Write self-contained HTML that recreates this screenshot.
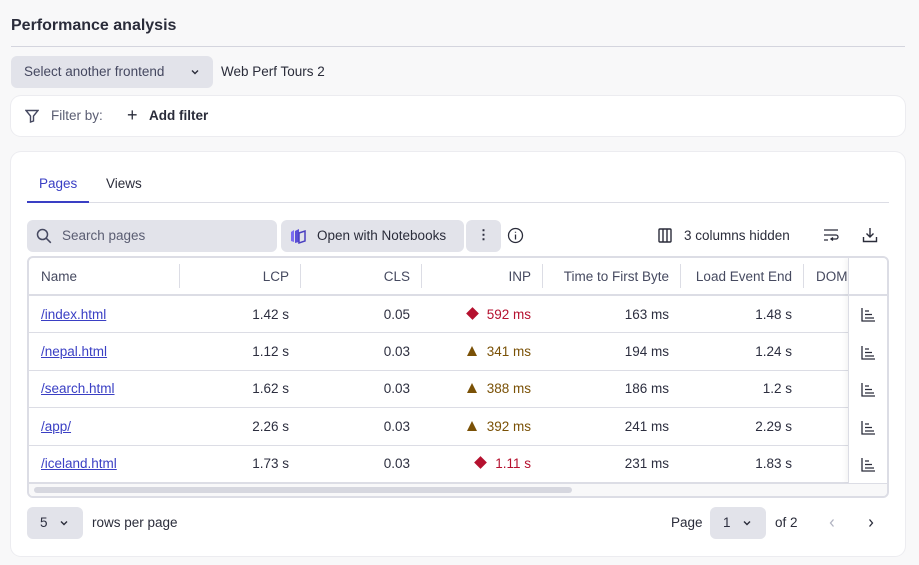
<!DOCTYPE html>
<html><head><meta charset="utf-8"><style>
*{box-sizing:border-box;margin:0;padding:0}
body{width:919px;height:565px;background:#f8f8f9;font-family:"Liberation Sans",sans-serif;font-size:13.5px;color:#2c2e3f;position:relative;overflow:hidden}
.abs{position:absolute}
.title{left:11px;top:17px;font-size:16px;font-weight:bold;color:#2a2c3a}
.hr{left:11px;top:46px;width:894px;height:1px;background:#d4d5de}
.sel{left:11px;top:56px;width:202px;height:32px;background:#e2e3ea;border-radius:6px;color:#454860;padding:8px 13px}
.card{background:#fff;box-shadow:0 0 0 1px #ececf0;border-radius:10px}
.btn{background:#e2e3ea;border-radius:6px}
table{border-collapse:collapse;position:absolute;left:0;top:0}
td{height:37.5px;border-bottom:1px solid #dcdde5;text-align:right;padding-right:12px;white-space:nowrap}
.hd td{height:37px;color:#464a60;border-bottom:2px solid #dcdde5}
.hd td{position:relative}
.sep{position:absolute;right:0;top:6px;height:24px;width:1px;background:#dcdde5}
a{color:#3a3fc4;text-decoration:underline}
.red{color:#b5112f}.amb{color:#7a5106}
.dia{display:inline-block;width:9px;height:9px;background:#b5112f;transform:rotate(45deg);margin-right:10px;vertical-align:1px}
.tri{display:inline-block;width:0;height:0;border-left:5.5px solid transparent;border-right:5.5px solid transparent;border-bottom:10px solid #7a5106;margin-right:10px}
.chev{position:absolute}
</style></head><body>
<div class="abs title">Performance analysis</div>
<div class="abs hr"></div>
<div class="abs sel">Select another frontend</div>
<svg class="abs" style="left:190px;top:68px" width="10" height="8" viewBox="0 0 10 8" fill="none" stroke="#2a2c3a" stroke-width="1.4"><path d="M2 2.5l3 3 3-3"/></svg>
<div class="abs" style="left:221px;top:64px;color:#2a2c3a">Web Perf Tours 2</div>
<div class="abs card" style="left:11px;top:96px;width:894px;height:40px">
<svg class="abs" style="left:14px;top:13px" width="14" height="14" viewBox="0 0 14 14" fill="none" stroke="#454860" stroke-width="1.4"><path d="M1 1.5h12L8.5 7v5L5.5 13V7z"/></svg>
<div class="abs" style="left:40px;top:12px;color:#5a5d72">Filter by:</div>
<div class="abs" style="left:116px;top:9px;font-size:18px;color:#2a2c3a">+</div>
<div class="abs" style="left:138px;top:12px;font-weight:bold;color:#2a2c3a">Add filter</div>
</div>
<div class="abs card" style="left:11px;top:152px;width:894px;height:404px">
<div class="abs" style="left:28px;top:24px;color:#3a3fc4">Pages</div>
<div class="abs" style="left:95px;top:24px;color:#2a2c3a">Views</div>
<div class="abs" style="left:16px;top:50px;width:862px;height:1px;background:#dcdde5"></div>
<div class="abs" style="left:16px;top:49px;width:62px;height:2px;background:#3a3fc4"></div>
<div class="abs btn" style="left:16px;top:68px;width:250px;height:32px"></div>
<svg class="abs" style="left:25px;top:76px" width="16" height="16" viewBox="0 0 16 16" fill="none" stroke="#454860" stroke-width="1.5"><circle cx="6.5" cy="6.5" r="5"/><path d="M10.3 10.3l4.5 4.5"/></svg>
<div class="abs" style="left:51px;top:76px;color:#5a5d72">Search pages</div>
<div class="abs btn" style="left:270px;top:68px;width:183px;height:32px"></div>
<svg class="abs" style="left:279px;top:75px" width="16" height="18" viewBox="0 0 16 18"><path d="M1 5l3-2v12l-3-1z" fill="#7b6cf0"/><path d="M5 4l4-2v13l-4 1z" fill="#5b4fd6"/><path d="M9 6l6-2v10l-6 2z" fill="none" stroke="#4a3fc0" stroke-width="1.5"/></svg>
<div class="abs" style="left:306px;top:76px;color:#2a2c3a">Open with Notebooks</div>
<div class="abs btn" style="left:455px;top:68px;width:35px;height:32px;text-align:center;font-weight:bold;padding-top:7px">&#8942;</div>
<svg class="abs" style="left:496px;top:75px" width="17" height="17" viewBox="0 0 17 17" fill="none" stroke="#2a2c3a" stroke-width="1.3"><circle cx="8.5" cy="8.5" r="7"/><path d="M8.5 7.5v5M8.5 4.8v1"/></svg>
<svg class="abs" style="left:647px;top:76px" width="14" height="15" viewBox="0 0 14 15" fill="none" stroke="#2a2c3a" stroke-width="1.4"><rect x="1" y="1" width="12" height="13" rx="1"/><path d="M5 1v13M9 1v13"/></svg>
<div class="abs" style="left:673px;top:76px;color:#2a2c3a">3 columns hidden</div>
<svg class="abs" style="left:812px;top:76px" width="16" height="15" viewBox="0 0 16 15" fill="none" stroke="#2a2c3a" stroke-width="1.3"><path d="M1 2h14M1 7h12a2 2 0 010 4H8M1 12h4M10 9.5l-2 1.5 2 1.5"/></svg>
<svg class="abs" style="left:851px;top:75px" width="16" height="16" viewBox="0 0 16 16" fill="none" stroke="#2a2c3a" stroke-width="1.4"><path d="M8 1v9M4.5 6.5L8 10l3.5-3.5M1.5 10v4.5h13V10"/></svg>
<div class="abs" style="left:16px;top:104px;width:862px;height:242px;border:2px solid #dcdde5;border-radius:6px;overflow:hidden;background:#fff">
<table>
<tr class="hd"><td style="width:151px;text-align:left;padding-left:12px">Name<span class="sep"></span></td><td style="width:121px">LCP<span class="sep"></span></td><td style="width:121px">CLS<span class="sep"></span></td><td style="width:121px">INP<span class="sep"></span></td><td style="width:138px">Time to First Byte<span class="sep"></span></td><td style="width:123px">Load Event End<span class="sep"></span></td><td style="width:60px;text-align:left;padding-left:12px">DOM</td></tr>
<tr><td style="text-align:left;padding-left:12px"><a>/index.html</a></td><td>1.42 s</td><td>0.05</td><td class="red"><span class="dia"></span>592 ms</td><td>163 ms</td><td>1.48 s</td><td></td></tr>
<tr><td style="text-align:left;padding-left:12px"><a>/nepal.html</a></td><td>1.12 s</td><td>0.03</td><td class="amb"><span class="tri"></span>341 ms</td><td>194 ms</td><td>1.24 s</td><td></td></tr>
<tr><td style="text-align:left;padding-left:12px"><a>/search.html</a></td><td>1.62 s</td><td>0.03</td><td class="amb"><span class="tri"></span>388 ms</td><td>186 ms</td><td>1.2 s</td><td></td></tr>
<tr><td style="text-align:left;padding-left:12px"><a>/app/</a></td><td>2.26 s</td><td>0.03</td><td class="amb"><span class="tri"></span>392 ms</td><td>241 ms</td><td>2.29 s</td><td></td></tr>
<tr><td style="text-align:left;padding-left:12px"><a>/iceland.html</a></td><td>1.73 s</td><td>0.03</td><td class="red"><span class="dia"></span>1.11 s</td><td>231 ms</td><td>1.83 s</td><td></td></tr>
</table>
<div class="abs" style="left:819px;top:0;width:41px;height:225px;background:#fff;border-left:1px solid #dcdde5;box-shadow:-3px 0 4px rgba(0,0,0,.04)">
<div class="abs" style="left:0;top:36px;width:41px;height:2px;background:#dcdde5"></div>
<svg class="abs" style="left:12px;top:49px" width="15" height="15" viewBox="0 0 15 15" fill="none" stroke="#2a2c3a" stroke-width="1.3"><path d="M1 1v13h13M4 4h4M4 7.5h7M4 11h9"/></svg>
<svg class="abs" style="left:12px;top:87px" width="15" height="15" viewBox="0 0 15 15" fill="none" stroke="#2a2c3a" stroke-width="1.3"><path d="M1 1v13h13M4 4h4M4 7.5h7M4 11h9"/></svg>
<svg class="abs" style="left:12px;top:124px" width="15" height="15" viewBox="0 0 15 15" fill="none" stroke="#2a2c3a" stroke-width="1.3"><path d="M1 1v13h13M4 4h4M4 7.5h7M4 11h9"/></svg>
<svg class="abs" style="left:12px;top:162px" width="15" height="15" viewBox="0 0 15 15" fill="none" stroke="#2a2c3a" stroke-width="1.3"><path d="M1 1v13h13M4 4h4M4 7.5h7M4 11h9"/></svg>
<svg class="abs" style="left:12px;top:199px" width="15" height="15" viewBox="0 0 15 15" fill="none" stroke="#2a2c3a" stroke-width="1.3"><path d="M1 1v13h13M4 4h4M4 7.5h7M4 11h9"/></svg>
</div>
<div class="abs" style="left:0;top:225px;width:860px;height:15px;background:#f8f8f9;border-top:1px solid #dcdde5"></div>
<div class="abs" style="left:5px;top:229px;width:538px;height:6px;background:#d6d7df;border-radius:3px"></div>
</div>
<div class="abs btn" style="left:16px;top:355px;width:56px;height:32px;padding:8px 13px">5</div>
<svg class="abs" style="left:48px;top:367px" width="10" height="8" viewBox="0 0 10 8" fill="none" stroke="#2a2c3a" stroke-width="1.4"><path d="M2 2.5l3 3 3-3"/></svg>
<div class="abs" style="left:81px;top:363px;color:#2a2c3a">rows per page</div>
<div class="abs" style="left:660px;top:363px;color:#2a2c3a">Page</div>
<div class="abs btn" style="left:699px;top:355px;width:56px;height:32px;padding:8px 13px">1</div>
<svg class="abs" style="left:731px;top:367px" width="10" height="8" viewBox="0 0 10 8" fill="none" stroke="#2a2c3a" stroke-width="1.4"><path d="M2 2.5l3 3 3-3"/></svg>
<div class="abs" style="left:764px;top:363px;color:#2a2c3a">of 2</div>
<svg class="abs" style="left:817px;top:366px" width="8" height="10" viewBox="0 0 8 10" fill="none" stroke="#b0b2c0" stroke-width="1.3"><path d="M5.5 1.5L2.5 5l3 3.5"/></svg>
<svg class="abs" style="left:856px;top:366px" width="8" height="10" viewBox="0 0 8 10" fill="none" stroke="#2a2c3a" stroke-width="1.3"><path d="M2.5 1.5L5.5 5l-3 3.5"/></svg>
</div>
</body></html>
